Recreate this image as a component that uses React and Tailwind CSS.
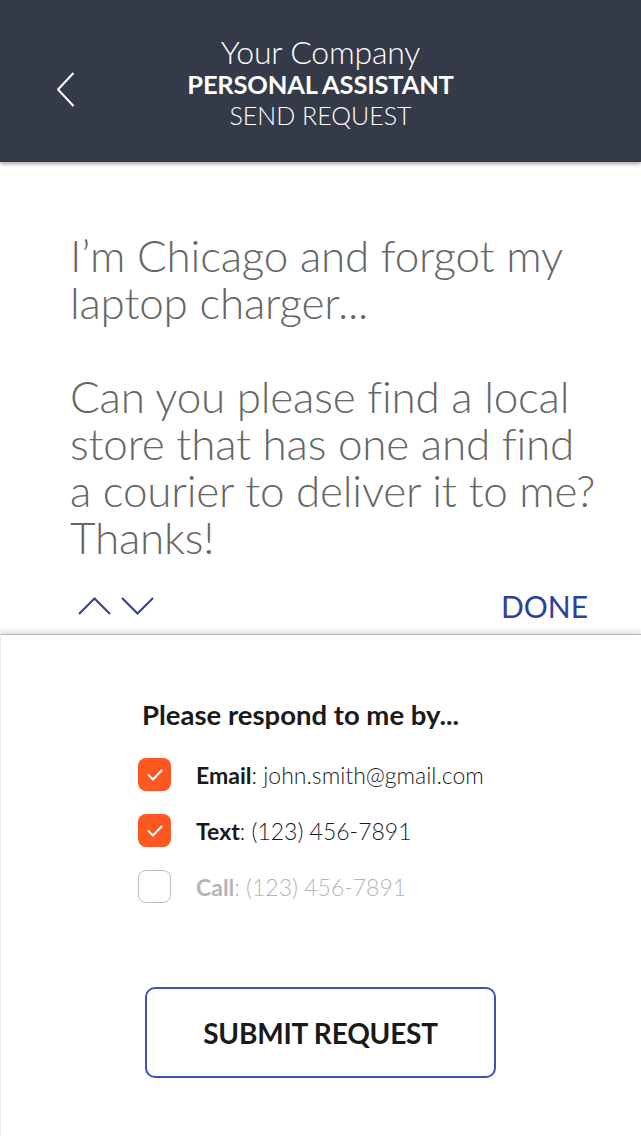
import React from "react";

export default function App() {
  return (
    <div className="w-[641px] h-[1136px] bg-white flex flex-col overflow-hidden" style={{ fontFamily: "Lato, 'Noto Sans', sans-serif" }}>
      <header className="relative z-10 h-[162px] bg-[#343a48] flex flex-col items-center justify-center shadow-[0_2px_4px_rgba(0,0,0,0.35)] shrink-0">
        <svg className="absolute left-[55px] top-[72px]" width="20" height="35" viewBox="0 0 20 35" fill="none">
          <polyline points="18,1.5 3,17.5 18,33.5" stroke="white" strokeWidth="2" strokeLinecap="round" strokeLinejoin="round" />
        </svg>
        <div className="text-white text-[32px] font-light leading-[32px] tracking-[-0.2px] mt-[4px]">Your Company</div>
        <div className="text-white text-[25.5px] font-bold leading-[32px] tracking-[-0.2px]">PERSONAL ASSISTANT</div>
        <div className="text-white text-[25px] font-light leading-[30px]">SEND REQUEST</div>
      </header>

      <div className="pt-[70px] pl-[70px] pr-[20px] text-[44px] font-light leading-[47px] text-[#666666] tracking-[-0.2px]">
        <p>I’m Chicago and forgot my<br />laptop charger...</p>
        <p className="mt-[47px]">Can you please find a local<br />store that has one and find<br />a courier to deliver it to me?<br />Thanks!</p>
      </div>

      <div className="flex items-center justify-between pl-[78px] pr-[53px] mt-[29px] h-[32px]">
        <div className="flex items-center gap-[10px]">
          <svg width="33" height="18" viewBox="0 0 33 18" fill="none">
            <polyline points="1,17 16.5,1.5 32,17" stroke="#2f3f9e" strokeWidth="2" />
          </svg>
          <svg width="33" height="18" viewBox="0 0 33 18" fill="none">
            <polyline points="1,1 16.5,16.5 32,1" stroke="#2f3f9e" strokeWidth="2" />
          </svg>
        </div>
        <div className="text-[30px] text-[#2f3f9e] leading-[32px] font-normal">DONE</div>
      </div>

      <div className="mt-[12px] flex-1 border-t border-[#b8b8b8] border-l border-l-[#eeeeee] shadow-[0_-3px_5px_rgba(0,0,0,0.12)] bg-white flex flex-col">
        <div className="pl-[141px] pt-[64px]">
          <div className="text-[27.5px] font-bold text-[#1a1a1a] leading-[32px] tracking-[0px]">Please respond to me by...</div>
          <div className="mt-[27px] flex flex-col gap-[23px] ml-[-4px]">
            <div className="flex items-center gap-[25px] h-[33px]">
              <div className="w-[33px] h-[33px] rounded-[8px] bg-[#ff5722] flex items-center justify-center">
                <svg width="16" height="12" viewBox="0 0 16 12" fill="none">
                  <polyline points="1.5,6 6,10.5 14.5,1.5" stroke="white" strokeWidth="2" strokeLinecap="round" strokeLinejoin="round" />
                </svg>
              </div>
              <div className="text-[23px] text-[#1a1a1a] leading-[28px]"><span className="font-bold">Email</span><span className="font-light">: john.smith@gmail.com</span></div>
            </div>
            <div className="flex items-center gap-[25px] h-[33px]">
              <div className="w-[33px] h-[33px] rounded-[8px] bg-[#ff5722] flex items-center justify-center">
                <svg width="16" height="12" viewBox="0 0 16 12" fill="none">
                  <polyline points="1.5,6 6,10.5 14.5,1.5" stroke="white" strokeWidth="2" strokeLinecap="round" strokeLinejoin="round" />
                </svg>
              </div>
              <div className="text-[23px] text-[#1a1a1a] leading-[28px]"><span className="font-bold">Text</span><span className="font-light">: (123) 456-7891</span></div>
            </div>
            <div className="flex items-center gap-[25px] h-[33px]">
              <div className="w-[33px] h-[33px] rounded-[8px] border border-[#bdbdbd] bg-white"></div>
              <div className="text-[23px] text-[#b5b5b5] leading-[28px]"><span className="font-bold">Call</span><span className="font-light">: (123) 456-7891</span></div>
            </div>
          </div>
        </div>
        <div className="flex justify-center mt-[84px]">
          <button className="w-[351px] h-[91px] ml-[-1px] rounded-[10px] border-2 border-[#3f51b5] bg-white text-[28px] font-bold text-[#1a1a1a] tracking-[-0.2px]">SUBMIT REQUEST</button>
        </div>
      </div>
    </div>
  );
}
